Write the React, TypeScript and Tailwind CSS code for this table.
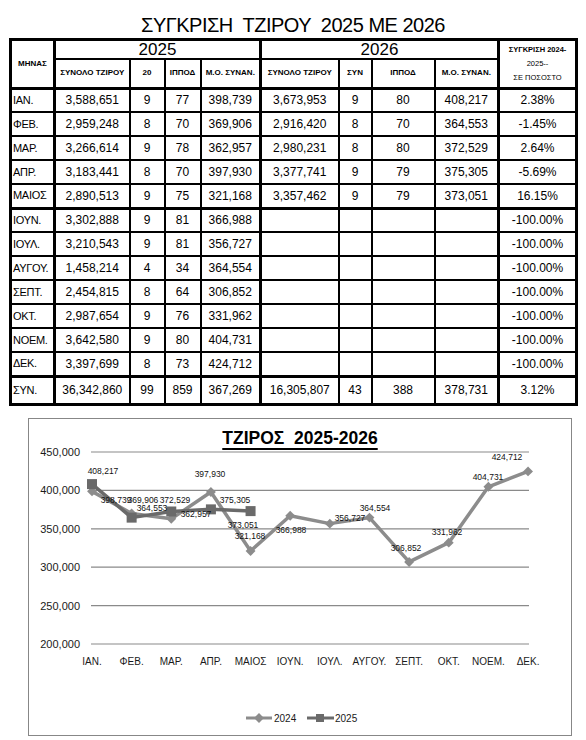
import React from 'react';

const months = ['ΙΑΝ.', 'ΦΕΒ.', 'ΜΑΡ.', 'ΑΠΡ.', 'ΜΑΙΟΣ', 'ΙΟΥΝ.', 'ΙΟΥΛ.', 'ΑΥΓΟΥ.', 'ΣΕΠΤ.', 'ΟΚΤ.', 'ΝΟΕΜ.', 'ΔΕΚ.'];

const rows: string[][] = [
  ['ΙΑΝ.', '3,588,651', '9', '77', '398,739', '3,673,953', '9', '80', '408,217', '2.38%'],
  ['ΦΕΒ.', '2,959,248', '8', '70', '369,906', '2,916,420', '8', '70', '364,553', '-1.45%'],
  ['ΜΑΡ.', '3,266,614', '9', '78', '362,957', '2,980,231', '8', '80', '372,529', '2.64%'],
  ['ΑΠΡ.', '3,183,441', '8', '70', '397,930', '3,377,741', '9', '79', '375,305', '-5.69%'],
  ['ΜΑΙΟΣ', '2,890,513', '9', '75', '321,168', '3,357,462', '9', '79', '373,051', '16.15%'],
  ['ΙΟΥΝ.', '3,302,888', '9', '81', '366,988', '', '', '', '', '-100.00%'],
  ['ΙΟΥΛ.', '3,210,543', '9', '81', '356,727', '', '', '', '', '-100.00%'],
  ['ΑΥΓΟΥ.', '1,458,214', '4', '34', '364,554', '', '', '', '', '-100.00%'],
  ['ΣΕΠΤ.', '2,454,815', '8', '64', '306,852', '', '', '', '', '-100.00%'],
  ['ΟΚΤ.', '2,987,654', '9', '76', '331,962', '', '', '', '', '-100.00%'],
  ['ΝΟΕΜ.', '3,642,580', '9', '80', '404,731', '', '', '', '', '-100.00%'],
  ['ΔΕΚ.', '3,397,699', '8', '73', '424,712', '', '', '', '', '-100.00%'],
];

const total = ['ΣΥΝ.', '36,342,860', '99', '859', '367,269', '16,305,807', '43', '388', '378,731', '3.12%'];

const s2024 = [398739, 369906, 362957, 397930, 321168, 366988, 356727, 364554, 306852, 331962, 404731, 424712];
const s2025 = [408217, 364553, 372529, 375305, 373051];

const labels: [string, number, number][] = [
  ['408,217', 103, 471],
  ['398,739', 116, 500],
  ['369,906', 143, 500],
  ['364,553', 152, 508],
  ['372,529', 175, 500],
  ['362,957', 196, 514],
  ['397,930', 210, 474],
  ['375,305', 235, 500],
  ['373,051', 243, 525],
  ['321,168', 250, 536],
  ['366,988', 291, 530],
  ['356,727', 350, 518],
  ['364,554', 375, 508],
  ['306,852', 406, 548],
  ['331,962', 447, 532],
  ['404,731', 488, 477],
  ['424,712', 507, 457],
];

const px = (i: number) => 92 + i * 39.64;
const py = (v: number) => 641 - (v - 200000) * 0.000768;

function cellClass(col: number, bottom: 'thin' | 'thick') {
  const side =
    col === 0
      ? 'border-l-[3px] border-r-[3px] text-left pl-[1px] text-[11px] tracking-[-0.3px] whitespace-nowrap'
      : col === 4 || col === 8
        ? 'border-r-[3px] text-center'
        : col === 9
          ? 'border-r-[3px] text-center'
          : 'text-center';
  const b = bottom === 'thick' ? 'border-b-[3px]' : '';
  return `border-2 border-black p-0 ${side} ${b}`;
}

function Chart() {
  const grid = [450000, 400000, 350000, 300000, 250000, 200000];
  const line24 = s2024.map((v, i) => `${px(i)},${py(v)}`).join(' ');
  const line25 = s2025.map((v, i) => `${px(i)},${py(v)}`).join(' ');
  return (
    <div className="ml-[28px] w-[544px] h-[318px] border border-[#878787] bg-white">
      <div className="h-[30px] pt-[11px] text-center text-[17.5px] font-bold leading-none whitespace-pre text-black">
        <span className="underline decoration-[1.5px] underline-offset-[4px]">ΤΖΙΡΟΣ  2025-2026</span>
      </div>
      <svg
        width="542"
        height="286"
        viewBox="29 446 542 286"
        className="overflow-visible"
        fontFamily="Liberation Sans, Arial, sans-serif"
      >
        {grid.map((g) => (
          <g key={g}>
            <line x1="91" x2="529" y1={py(g)} y2={py(g)} stroke="#8a8a8a" strokeWidth="1.2" />
            <text x="80" y={py(g) + 4} fontSize="11" textAnchor="end" fill="#1a1a1a">
              {g.toLocaleString('en-US')}
            </text>
          </g>
        ))}
        {months.map((m, i) => (
          <text key={m} x={px(i)} y="662" fontSize="10" textAnchor="middle" fill="#1a1a1a">
            {m}
          </text>
        ))}
        <polyline points={line24} fill="none" stroke="#8c8c8c" strokeWidth="3.5" strokeLinejoin="round" />
        {s2024.map((v, i) => (
          <rect
            key={i}
            x={px(i) - 3.5}
            y={py(v) - 3.5}
            width="7"
            height="7"
            fill="#8c8c8c"
            transform={`rotate(45 ${px(i)} ${py(v)})`}
          />
        ))}
        <polyline points={line25} fill="none" stroke="#6a6a6a" strokeWidth="3.5" strokeLinejoin="round" />
        {s2025.map((v, i) => (
          <rect key={i} x={px(i) - 5} y={py(v) - 5} width="10" height="10" fill="#6a6a6a" />
        ))}
        {labels.map(([t, x, y]) => (
          <text key={t} x={x} y={y} fontSize="8.5" textAnchor="middle" fill="#111">
            {t}
          </text>
        ))}
        <line x1="246" x2="272" y1="715" y2="715" stroke="#8c8c8c" strokeWidth="3" />
        <rect x="255.5" y="711.5" width="7" height="7" fill="#8c8c8c" transform="rotate(45 259 715)" />
        <text x="274" y="719" fontSize="10" fill="#1a1a1a">2024</text>
        <line x1="307" x2="334" y1="715" y2="715" stroke="#6a6a6a" strokeWidth="3" />
        <rect x="316" y="711" width="8" height="8" fill="#6a6a6a" />
        <text x="335" y="719" fontSize="10" fill="#1a1a1a">2025</text>
      </svg>
    </div>
  );
}

export default function App() {
  return (
    <div className="w-[586px] h-[740px] bg-white text-black font-['Liberation_Sans',Arial,sans-serif]">
      <div className="h-[38px] pt-[15px] text-center text-[20px] leading-none tracking-[-0.5px] whitespace-pre">
        ΣΥΓΚΡΙΣΗ  ΤΖΙΡΟΥ  2025 ΜΕ 2026
      </div>
      <table className="ml-[9px] w-[568px] table-fixed border-collapse border-[3px] border-black text-[12px] leading-none">
        <colgroup>
          <col className="w-[44px]" />
          <col className="w-[75px]" />
          <col className="w-[35px]" />
          <col className="w-[36px]" />
          <col className="w-[60px]" />
          <col className="w-[78px]" />
          <col className="w-[33px]" />
          <col className="w-[63px]" />
          <col className="w-[64px]" />
          <col className="w-[78px]" />
        </colgroup>
        <thead>
          <tr className="h-[19px]">
            <th rowSpan={2} className="border-[3px] border-black p-0 text-[8px] font-bold">
              ΜΗΝΑΣ
            </th>
            <th colSpan={4} className="border-2 border-r-[3px] border-t-[3px] border-black p-0 text-[17px] font-normal">
              2025
            </th>
            <th colSpan={4} className="border-2 border-r-[3px] border-t-[3px] border-black p-0 text-[17px] font-normal">
              2026
            </th>
            <th rowSpan={2} className="border-[3px] border-black p-0 text-[7.5px] font-normal leading-[14px]">
              <div className="font-bold">ΣΥΓΚΡΙΣΗ 2024-</div>
              <div>2025--</div>
              <div>ΣΕ ΠΟΣΟΣΤΟ</div>
            </th>
          </tr>
          <tr className="h-[29px] text-[8px] font-bold whitespace-nowrap">
            <th className="border-2 border-b-[3px] border-black p-0">ΣΥΝΟΛΟ ΤΖΙΡΟΥ</th>
            <th className="border-2 border-b-[3px] border-black p-0">20</th>
            <th className="border-2 border-b-[3px] border-black p-0">ΙΠΠΟΔ</th>
            <th className="border-2 border-b-[3px] border-r-[3px] border-black p-0">Μ.Ο. ΣΥΝΑΝ.</th>
            <th className="border-2 border-b-[3px] border-black p-0">ΣΥΝΟΛΟ ΤΖΙΡΟΥ</th>
            <th className="border-2 border-b-[3px] border-black p-0">ΣΥΝ</th>
            <th className="border-2 border-b-[3px] border-black p-0">ΙΠΠΟΔ</th>
            <th className="border-2 border-b-[3px] border-r-[3px] border-black p-0">Μ.Ο. ΣΥΝΑΝ.</th>
          </tr>
        </thead>
        <tbody>
          {rows.map((r, ri) => (
            <tr key={ri} className="h-[24px]">
              {r.map((c, ci) => (
                <td key={ci} className={cellClass(ci, ri === 4 || ri === 11 ? 'thick' : 'thin')}>
                  {c}
                </td>
              ))}
            </tr>
          ))}
          <tr className="h-[28px]">
            {total.map((c, ci) => (
              <td key={ci} className={cellClass(ci, 'thick')}>
                {c}
              </td>
            ))}
          </tr>
        </tbody>
      </table>
      <div className="h-[12px]" />
      <Chart />
    </div>
  );
}
